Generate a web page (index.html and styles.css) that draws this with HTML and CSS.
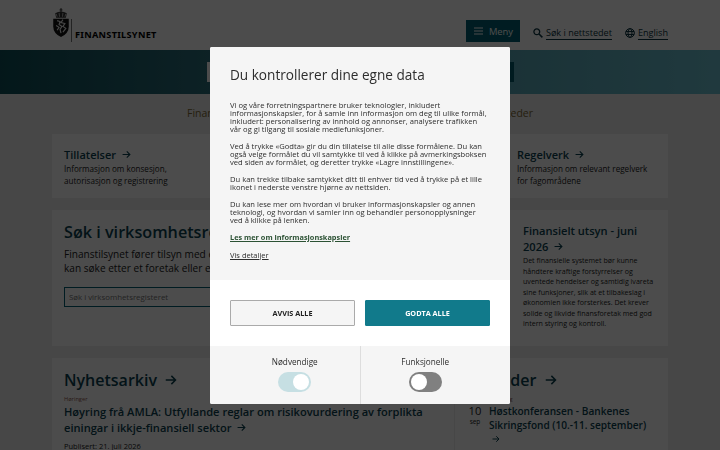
FILE: index.html
```html
<!DOCTYPE html>
<html lang="no">
<head>
  <meta charset="UTF-8">
  <meta name="viewport" content="width=device-width, initial-scale=1.0">
  <title>Finanstilsynet</title>
  <link rel="stylesheet" href="styles.css">
</head>
<body>
  <svg class="symbols" aria-hidden="true">
    <symbol id="arrow" viewBox="0 0 16 16">
      <path d="M1 8h13M8.5 2.5L14 8l-5.5 5.5" fill="none" stroke="currentColor" stroke-width="2"/>
    </symbol>
  </svg>

  <header class="site-header">
    <a class="logo">
      <svg class="crest" viewBox="0 0 18 32">
        <path d="M9 0v5M7.5 2h3" stroke="#000" stroke-width=".8"/>
        <path d="M3 5.5Q9 1.5 15 5.5L14 10H4z" fill="#333"/>
        <path d="M4 6l1 3M7 5l.5 4M11 5l-.5 4M14 6l-1 3" stroke="#ddd" stroke-width=".8"/>
        <path d="M1 11h16v8q0 7-8 11-8-4-8-11z" fill="#111"/>
        <path d="M5 13l3 1-1 3 3 2-2 3 1 4M11 12l-2 3 4 1-2 3 3 2-3 4M4 18l3 2-2 3" fill="none" stroke="#eee" stroke-width="1.2"/>
      </svg>
      <span class="logo-name">FINANSTILSYNET</span>
    </a>
    <nav class="tools">
      <button class="menu-button">
        <svg width="9" height="8" viewBox="0 0 9 8"><path d="M0 1h9M0 4h9M0 7h9" stroke="currentColor"/></svg>
        Meny
      </button>
      <a class="tool">
        <svg width="10" height="10" viewBox="0 0 10 10"><circle cx="3.8" cy="3.8" r="2.9" fill="none" stroke="currentColor" stroke-width="1.3"/><path d="M6 6l3.4 3.4" stroke="currentColor" stroke-width="1.5"/></svg>
        <span>Søk i nettstedet</span>
      </a>
      <a class="tool">
        <svg width="10" height="10" viewBox="0 0 11 11"><g fill="none" stroke="currentColor" stroke-width="1.1"><circle cx="5.5" cy="5.5" r="4.8"/><ellipse cx="5.5" cy="5.5" rx="2.2" ry="4.8"/><path d="M1 3.9h9M1 7.1h9"/></g></svg>
        <span>English</span>
      </a>
    </nav>
  </header>

  <div class="hero">
    <div class="hero-search"><span class="hero-input"></span><span class="hero-button"></span></div>
  </div>

  <nav class="shortcuts"><a>Finansforetak</a><a>Nettsteder</a></nav>

  <main class="content">
    <div class="topics">
      <section class="card topic">
        <h3>Tillatelser <svg class="arrow"><use href="#arrow"/></svg></h3>
        <p>Informasjon om konsesjon, autorisasjon og registrering</p>
      </section>
      <section class="card topic">
        <h3>Regelverk <svg class="arrow"><use href="#arrow"/></svg></h3>
        <p>Informasjon om relevant regelverk for fagområdene</p>
      </section>
    </div>

    <div class="card register">
      <section class="register-search">
        <h2>Søk i virksomhetsregisteret</h2>
        <p>Finanstilsynet fører tilsyn med en rekke<br>kan søke etter et foretak eller en person</p>
        <input type="text" placeholder="Søk i virksomhetsregisteret">
      </section>
      <section class="outlook">
        <h3>Finansielt utsyn - juni 2026 <svg class="arrow"><use href="#arrow"/></svg></h3>
        <p>Det finansielle systemet bør kunne håndtere kraftige forstyrrelser og uventede hendelser og samtidig ivareta sine funksjoner, slik at et tilbakeslag i økonomien ikke forsterkes. Det krever solide og likvide finansforetak med god intern styring og kontroll.</p>
      </section>
    </div>

    <div class="card lists">
      <section class="news">
        <h2>Nyhetsarkiv <svg class="arrow"><use href="#arrow"/></svg></h2>
        <span class="tag">Høringer</span>
        <h3>Høyring frå AMLA: Utfyllande reglar om risikovurdering av forplikta einingar i ikkje-finansiell sektor <svg class="arrow"><use href="#arrow"/></svg></h3>
        <p class="date">Publisert: 21. juli 2026</p>
      </section>
      <section class="calendar">
        <h2>Kalender <svg class="arrow"><use href="#arrow"/></svg></h2>
        <span class="tag">Arrangering</span>
        <div class="event">
          <div class="event-date">10<small>sep</small></div>
          <h3>Høstkonferansen - Bankenes Sikringsfond (10.-11. september) <svg class="arrow"><use href="#arrow"/></svg></h3>
        </div>
      </section>
    </div>
  </main>

  <div class="overlay">
    <div class="dialog" role="dialog">
      <div class="dialog-body">
        <h1>Du kontrollerer dine egne data</h1>
        <p>Vi og våre forretningspartnere bruker teknologier, inkludert informasjonskapsler, for å samle inn informasjon om deg til ulike formål, inkludert: personalisering av innhold og annonser, analysere trafikken<br>vår og gi tilgang til sosiale mediefunksjoner.</p>
        <p>Ved å trykke «Godta» gir du din tillatelse til alle disse formålene. Du kan også velge formålet du vil samtykke til ved å klikke på avmerkingsboksen ved siden av formålet, og deretter trykke «Lagre innstillingene».</p>
        <p>Du kan trekke tilbake samtykket ditt til enhver tid ved å trykke på et lille ikonet i nederste venstre hjørne av nettsiden.</p>
        <p>Du kan lese mer om hvordan vi bruker informasjonskapsler og annen teknologi, og hvordan vi samler inn og behandler personopplysninger<br>ved å klikke på lenken.</p>
        <a class="more">Les mer om informasjonskapsler</a>
        <a class="details">Vis detaljer</a>
      </div>
      <div class="dialog-buttons">
        <button class="decline">AVVIS ALLE</button>
        <button class="accept">GODTA ALLE</button>
      </div>
      <div class="dialog-options">
        <div class="option">Nødvendige<span class="toggle on"></span></div>
        <div class="option">Funksjonelle<span class="toggle"></span></div>
      </div>
    </div>
  </div>
</body>
</html>
```

FILE: styles.css
```css
* {
  box-sizing: border-box;
}

body {
  margin: 0;
  height: 450px;
  overflow: hidden;
  background: #ededed;
  color: #222;
  font-family: "Open Sans", sans-serif;
}

h1, h2, h3, p {
  margin: 0;
}

h2, h3 {
  color: #0b4250;
  font-weight: 600;
}

.symbols {
  display: none;
}

.arrow {
  display: inline-block;
  width: 9px;
  height: 9px;
  margin-left: 3px;
}

/* Header */
.site-header {
  display: flex;
  justify-content: space-between;
  height: 50px;
  padding: 0 52px;
  background: #fff;
}

.logo {
  display: flex;
  padding-top: 8px;
}

.crest {
  width: 18px;
  height: 31px;
}

.logo-name {
  height: 23px;
  margin: 11px 0 0 1px;
  padding: 8px 0 0 3px;
  border-left: 1px solid #777;
  color: #000;
  font-family: "Noto Sans", sans-serif;
  font-size: 9.2px;
  font-weight: 700;
  line-height: 15px;
  letter-spacing: .28px;
}

.tools {
  display: flex;
  align-items: flex-start;
  gap: 13px;
  padding-top: 20px;
}

.menu-button {
  display: flex;
  align-items: center;
  gap: 6px;
  width: 54px;
  height: 22px;
  padding: 0 0 0 8px;
  border: 0;
  background: #006072;
  color: #fff;
  font: 9.4px "Open Sans", sans-serif;
}

.tool {
  display: flex;
  align-items: center;
  gap: 3px;
  margin-top: 6px;
  color: #0b3340;
  font-size: 9.1px;
  line-height: 13px;
}

.tool span {
  border-bottom: 1px solid #0b3340;
}

/* Search band */
.hero {
  height: 44px;
  padding: 12px 206px 0 207px;
  background: linear-gradient(90deg, #0e4f58, #2c6f7c 29%, #5aa9b8 72%, #6cc0d0);
}

.hero-search {
  display: flex;
  height: 20px;
}

.hero-input {
  flex: 1;
  background: #fff;
}

.hero-button {
  width: 50px;
  background: #005d6c;
}

.shortcuts {
  display: flex;
  justify-content: space-between;
  padding: 12px 187px 0;
  color: #7d6a35;
  font-size: 10.5px;
  line-height: 15px;
}

/* Cards */
.content {
  width: 616px;
  margin: 13px auto 0;
}

.card {
  background: #fff;
}

.topics {
  display: grid;
  grid-template-columns: 1fr 163px;
}

.topic {
  height: 64px;
  padding: 13px 12px 0;
}

.topic h3 {
  font-size: 11px;
  line-height: 16px;
}

.topic p {
  width: 138px;
  font-size: 8.1px;
  line-height: 12px;
}

.register {
  display: flex;
  justify-content: space-between;
  height: 136px;
  margin-top: 12px;
  padding: 12px;
}

.register h2 {
  font-size: 16.2px;
  line-height: 21px;
}

.register-search p {
  margin-top: 4px;
  font-size: 10.1px;
  line-height: 14px;
}

.register input {
  width: 290px;
  height: 20px;
  margin-top: 12px;
  padding: 0 4px;
  border: 1px solid #006072;
  font: 7.85px "Open Sans", sans-serif;
}

.outlook {
  width: 133px;
  padding-top: 1px;
}

.outlook h3 {
  font-size: 11.1px;
  line-height: 16px;
}

.outlook p {
  font-size: 7.08px;
  line-height: 10.5px;
}

/* News and calendar */
.lists {
  display: flex;
  height: 100px;
  margin-top: 12px;
}

.news {
  width: 403px;
  padding: 11px 12px;
  border-right: 1px solid #ededed;
}

.lists h2 {
  font-size: 16px;
  line-height: 23px;
}

.lists h2 .arrow {
  width: 12px;
  height: 12px;
  margin-left: 4px;
}

.tag {
  display: block;
  margin-top: 3px;
  color: #8f5a50;
  font-size: 5.7px;
  line-height: 9px;
}

.news h3 {
  font-size: 11.1px;
  line-height: 16px;
}

.date {
  margin-top: 5px;
  font-size: 7.5px;
  line-height: 10px;
}

.calendar {
  flex: 1;
  padding: 11px 0 0 12px;
}

.calendar .tag {
  margin-left: 14px;
}

.event {
  display: flex;
  gap: 6px;
}

.event-date {
  width: 16px;
  font-size: 11.2px;
  line-height: 14px;
  text-align: center;
}

.event-date small {
  display: block;
  font-size: 6.5px;
  line-height: 8px;
}

.event h3 {
  width: 162px;
  font-size: 10.1px;
  line-height: 14px;
}

.event .arrow {
  width: 8px;
  height: 8px;
}

/* Consent dialog */
.overlay {
  position: fixed;
  inset: 0;
  display: flex;
  justify-content: center;
  align-items: center;
  background: rgba(0, 0, 0, .7);
}

.dialog {
  width: 300px;
  height: 357px;
  overflow: hidden;
  border-radius: 2px;
  background: #fff;
  color: #2d2d2d;
}

.dialog-body {
  height: 233px;
  padding: 18px 20px 0;
  background: #f5f5f5;
}

.dialog h1 {
  margin-bottom: 16px;
  font-size: 13.6px;
  font-weight: 400;
  line-height: 20px;
}

.dialog p {
  margin-bottom: 8.3px;
  font-size: 7.6px;
  line-height: 8.25px;
}

.more, .details {
  display: block;
  font-size: 7.5px;
  line-height: 9px;
  text-decoration: underline;
}

.more {
  color: #2c5234;
  font-size: 7.35px;
  font-weight: 700;
}

.details {
  margin-top: 9px;
}

.dialog-buttons {
  display: flex;
  gap: 10px;
  padding: 20px;
}

.dialog-buttons button {
  flex: 1;
  height: 26px;
  padding: 0;
  border: 1px solid #aaa;
  border-radius: 1px;
  background: #f5f5f5;
  color: #222;
  font: 700 7.25px "Open Sans", sans-serif;
}

.dialog-buttons .accept {
  border-color: #117a8b;
  background: #117a8b;
  color: #fff;
}

.dialog-options {
  display: flex;
  height: 58px;
  padding: 0 20px;
  background: #f5f5f5;
}

.option {
  display: flex;
  flex: 1;
  flex-direction: column;
  align-items: center;
  padding-top: 10px;
  font-size: 8.2px;
  line-height: 11px;
}

.option + .option {
  border-left: 1px solid #ddd;
}

.toggle {
  display: flex;
  width: 33px;
  height: 20px;
  margin-top: 5px;
  padding: 2px;
  border-radius: 10px;
  background: #808080;
}

.toggle::before {
  content: "";
  width: 16px;
  height: 16px;
  border-radius: 50%;
  background: #fff;
}

.toggle.on {
  justify-content: flex-end;
  background: #c6dfe3;
}
```
